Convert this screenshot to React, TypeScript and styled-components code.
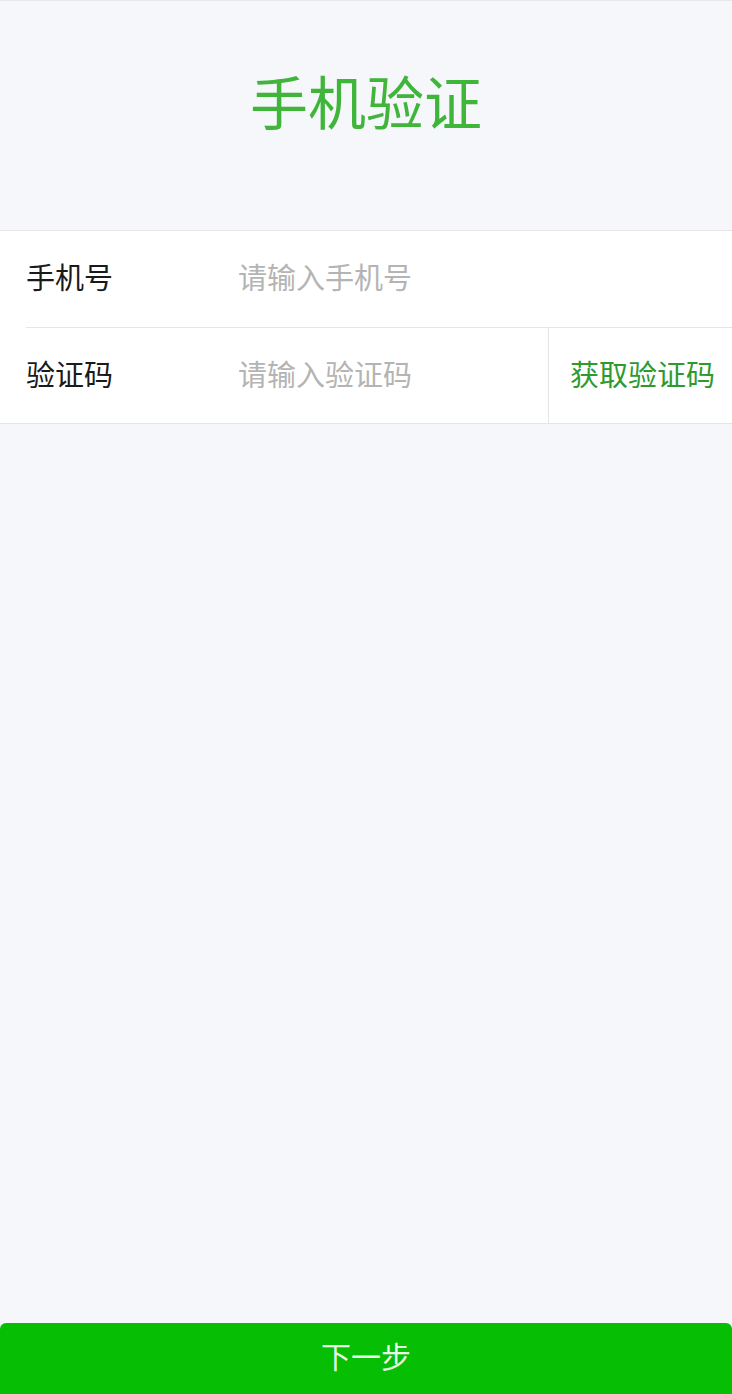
import React, { useState } from 'react'
import styled, { createGlobalStyle } from 'styled-components'

const GlobalStyle = createGlobalStyle`
  html, body {
    margin: 0;
    padding: 0;
    background-color: #f5f7fb;
  }
  body {
    font-family: 'Noto Sans CJK SC', 'Noto Sans', sans-serif;
  }
  * {
    box-sizing: border-box;
  }
`

const App: React.FC = () => {
  const [phone, setPhone] = useState('')
  const [code, setCode] = useState('')

  return (
    <Page>
      <GlobalStyle />
      <Header>
        <Title>手机验证</Title>
      </Header>
      <Form>
        <Row>
          <Label>手机号</Label>
          <Input
            type="tel"
            value={phone}
            onChange={(e) => setPhone(e.target.value)}
            placeholder="请输入手机号"
          />
        </Row>
        <Row>
          <Label>验证码</Label>
          <Input
            type="text"
            value={code}
            onChange={(e) => setCode(e.target.value)}
            placeholder="请输入验证码"
          />
          <CodeButton type="button">获取验证码</CodeButton>
        </Row>
      </Form>
      <NextButton type="button">下一步</NextButton>
    </Page>
  )
}

const Page = styled.div`
  display: flex;
  flex-direction: column;
  min-height: 100vh;
  background-color: #f5f7fb;
  border-top: 1px solid #e6e8ec;
`

const Header = styled.div`
  display: flex;
  justify-content: center;
  padding: 70px 0 101px;
`

const Title = styled.h1`
  margin: 0;
  font-size: 58px;
  line-height: 58px;
  font-weight: 400;
  color: #3fb53a;
`

const Form = styled.div`
  background-color: #ffffff;
  border-top: 1px solid #e5e5e5;
  border-bottom: 1px solid #e5e5e5;
  padding-left: 26px;
`

const Row = styled.div`
  display: flex;
  align-items: stretch;
  height: 96px;

  & + & {
    border-top: 1px solid #e5e5e5;
  }
`

const Label = styled.div`
  display: flex;
  align-items: center;
  width: 212px;
  flex-shrink: 0;
  padding-bottom: 6px;
  font-size: 29px;
  color: #1a1a1a;
`

const Input = styled.input`
  flex: 1;
  min-width: 0;
  border: none;
  outline: none;
  padding: 0 0 6px;
  background: transparent;
  font-family: inherit;
  font-size: 29px;
  color: #1a1a1a;

  &::placeholder {
    color: #b4b4b4;
  }
`

const CodeButton = styled.button`
  width: 184px;
  flex-shrink: 0;
  border: none;
  border-left: 1px solid #e5e5e5;
  background: transparent;
  padding: 0 0 6px 4px;
  font-family: inherit;
  font-size: 29px;
  color: #2f9a2c;
  cursor: pointer;
`

const NextButton = styled.button`
  margin-top: auto;
  height: 71px;
  border: none;
  border-radius: 6px 6px 0 0;
  background-color: #06be04;
  padding: 0 0 7px;
  font-family: inherit;
  font-size: 30px;
  color: rgba(255, 255, 255, 0.92);
  cursor: pointer;
`

export default App
